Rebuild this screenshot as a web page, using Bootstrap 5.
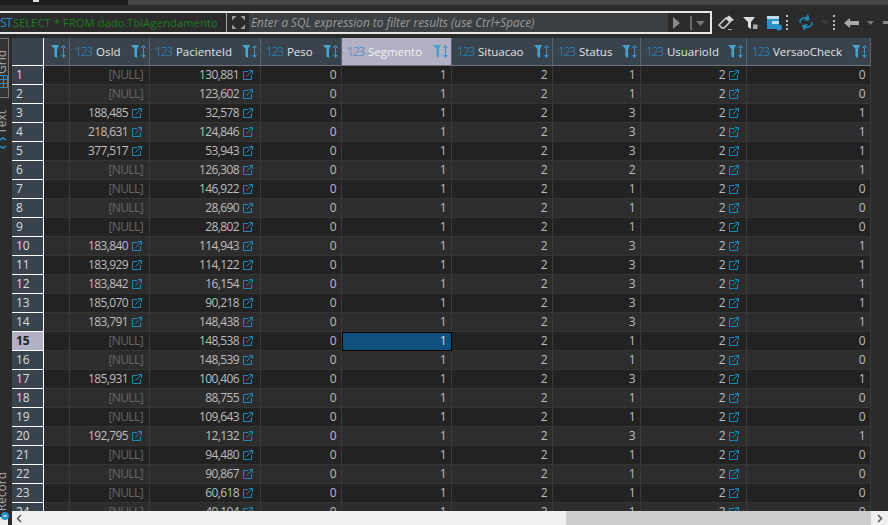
<!DOCTYPE html>
<html lang="en">
<head>
<meta charset="utf-8">
<title>dado.TblAgendamento</title>
<link href="https://cdn.jsdelivr.net/npm/bootstrap@5.3.0/dist/css/bootstrap.min.css" rel="stylesheet">
<style>
html,body{height:100%;overflow:hidden;background:#2b2b2b}
body{font-family:"Open Sans","Noto Sans",sans-serif;font-size:12px;color:#c8c8c8}
.app{width:888px;height:525px}
.topstrip{height:5px;background:#1c1c1c}
.topmark{width:6px;height:2px;margin-left:33px;background:#ddd}
.topfill{margin-left:89px;background:#454545}
.toolrow{height:33px;background:#2b2b2b;padding-top:6px}
.filterbox{width:712px;height:23px;border:2px solid #e6e6e6;border-left:0;background:#3c3f41}
.sqltext{width:226px;color:#1f7a1f;font-size:11.300px;background:#2b2b2b;white-space:nowrap;line-height:19px}
.sqlicon{color:#2a8fc4;font-size:12.500px;letter-spacing:-1px;margin-right:1px}
.expand{width:23px;height:19px;border-left:1px solid #aaa;background:#2b2b2b}
.hint{color:#9a9a9a;font-style:italic;font-size:11.800px;line-height:19px;white-space:nowrap;padding-left:2px}
.runbox{width:42px;height:19px;background:#2b2b2b}
.slot{height:23px}
.s28{width:28px}.s22{width:22px}.s24{width:24px}.s5{width:5px}.s29{width:29px}.s10{width:10px}.s8{width:8px}.s26{width:26px}.s12{width:12px}
.sep{width:2px;height:15px;border-left:2px dotted #bbb}
.mainarea{height:487px}
.rail{width:12px;background:#2b2b2b;position:relative;overflow:hidden}
.railbox{position:absolute;top:0;left:-1px;width:10px;height:60px;border:1px solid #777;background:#333}
.railtab{position:absolute;left:-5px;writing-mode:vertical-rl;transform:rotate(180deg);color:#a8a8a8;font-size:12px;line-height:14px}
.railicon{position:absolute;left:0}
.t-grid{top:12px}.t-text{top:72px}.t-rec{top:434px}
.i-grid{top:37px}.i-text{top:99px}.i-rec{top:474px}
.gridwrap{width:876px;overflow:hidden;background:#2b2b2b}
.rows{height:473px;overflow:hidden}
.dg{table-layout:fixed;border-collapse:separate;border-spacing:0;width:859px;margin:0}
.dg th,.dg td{padding:0;box-sizing:border-box;white-space:nowrap;overflow:hidden}
.dg thead th{height:28px;background:#38434e;color:#e2e2e2;font-weight:400;font-size:11.500px;border-right:1px solid #5b646c;border-bottom:1px solid #6f7378;vertical-align:middle}
.dg thead th.corner{border-right:1px solid #fff;border-bottom:1px solid #fff}
.dg thead th.active-col{background:#b1b0c4;color:#f2f2f2}
.dg .nm{color:#2a8fc4;font-size:12px;font-weight:300;letter-spacing:-1.200px;margin-right:4px}
.dg .active-col .nm{color:#2f86c0}
.dg tbody td{height:19px;font-size:12px;letter-spacing:-.6px;line-height:18px;padding:0 5px 0 0;text-align:right;vertical-align:top;border-right:1px solid #3a3a3a;color:#bdbdbd;border-bottom:1px solid #343434}
.dg tbody tr:nth-child(odd) td{background:#222}
.dg tbody tr:nth-child(even) td{background:#2d2d2d}
.dg tbody th{height:19px;background:#38434e!important;color:#dcdcdc;font-weight:400;border-right:1px solid #fff;border-bottom:1px solid #fff;padding:0 0 0 4px;line-height:18px;vertical-align:top}
.dg tbody th.cur{background:#b1b0c4!important;color:#222;font-weight:700}
.dg tbody td.null{color:#666;padding-right:6px}
.dg tbody td.sel{background:#10507f!important;outline:1px solid #000;outline-offset:-1px;color:#ddd}
.lk{width:10px;height:10px;margin-left:4px;vertical-align:-1px}
.linked{padding-right:7px!important}
.hscroll{height:14px;background:#f0f0f0}
.arrowl{width:14px}
.arrowr{width:17px}
.thumb{background:#cdcdcd;width:305px;margin-left:auto;height:14px}
.colfilter{flex:0 0 auto;margin-right:2px}
.hcell{padding-left:5px}
</style>
</head>
<body>
<svg width="0" height="0" class="position-absolute">
<symbol id="lnk" viewBox="0 0 10 10"><path d="M5.500 1.500H.500v8h8V5M3.500 6.500L9.500.500M6 .500h3.500V4" fill="none" stroke="#1f86b8" stroke-width="1"/></symbol>
<symbol id="flt" viewBox="0 0 17 15"><path d="M1 1h8L7 5v9L4.500 12.500V5z" fill="#4aa3cf"/><path d="M13.500 1l-2.500 3h5zM13.500 14l-2.500-3h5zM13 3h1v9h-1z" fill="#3b93c4"/></symbol>
</svg>
<div class="app d-flex flex-column">
  <div class="topstrip d-flex"><div class="topmark"></div><div class="topfill flex-grow-1"></div></div>
  <div class="toolrow d-flex align-items-start">
    <div class="filterbox d-flex">
      <div class="sqltext"><span class="sqlicon">ST</span>SELECT * FROM dado.TblAgendamento</div>
      <div class="expand d-flex align-items-center justify-content-center">
        <svg width="15" height="15" viewBox="0 0 15 15"><path d="M1 1h4.500L1 5.500zM14 1H9.500L14 5.500zM1 14h4.500L1 9.500zM14 14H9.500L14 9.500z" fill="#9a9a9a"/></svg>
      </div>
      <div class="hint flex-grow-1">Enter a SQL expression to filter results (use Ctrl+Space)</div>
      <div class="runbox d-flex align-items-center justify-content-around">
        <svg width="9" height="12" viewBox="0 0 9 12"><path d="M1 0l7 6-7 6z" fill="#8a8a8a"/></svg>
        <svg width="16" height="14" viewBox="0 0 16 14"><path d="M1 0v14" stroke="#aaa"/><path d="M6 5h9l-4.500 5z" fill="#777"/></svg>
      </div>
    </div>
    <div class="d-flex align-items-center">
      <div class="slot s28 d-flex align-items-center justify-content-center"><svg width="17" height="16" viewBox="0 0 17 16"><path d="M1 10l7-7 4 4-6 6H4z" fill="none" stroke="#d0d0d0" stroke-width="1.500"/><path d="M8 3l3-2.500 5 4.500-4 2z" fill="#d8d8d8"/><path d="M10 14.500h4" stroke="#aaa"/></svg></div>
      <div class="slot s22 d-flex align-items-center justify-content-center"><svg width="16" height="14" viewBox="0 0 16 14"><path d="M0 1h12L8 6v7L5 11V6z" fill="#ddd"/><path d="M10 8.500h4.500V13H10z" fill="#aaa"/></svg></div>
      <div class="slot s24 d-flex align-items-center justify-content-center"><svg width="17" height="16" viewBox="0 0 17 16"><path d="M1 1h12v13H1z" fill="#2a8fc4"/><path d="M1 1h12v3H1zM6 6h7v3H6z" fill="#bde"/><circle cx="13" cy="12.500" r="3" fill="#2a8fc4"/></svg></div>
      <div class="slot s5 d-flex align-items-center"><span class="sep"></span></div>
      <div class="slot s29 d-flex align-items-center justify-content-center"><svg width="16" height="17" viewBox="0 0 16 17"><path d="M1 8a6 6 0 0 1 7-5l2-3 2 6-6 1 1.500-2A3.500 3.500 0 0 0 3 9.500zM15 9a6 6 0 0 1-7 5l-2 3-2-6 6-1-1.500 2A3.500 3.500 0 0 0 13 7.500z" fill="#1f86b8"/></svg></div>
      <div class="slot s10 d-flex align-items-center justify-content-center"><svg width="8" height="5" viewBox="0 0 8 5"><path d="M0 0h8L4 5z" fill="#3a3a3a"/></svg></div>
      <div class="slot s8 d-flex align-items-center justify-content-center"><span class="sep"></span></div>
      <div class="slot s26 d-flex align-items-center justify-content-center"><svg width="15" height="12" viewBox="0 0 15 12"><path d="M0 6l6-5v3h9v4H6v3z" fill="#aaa"/></svg></div>
      <div class="slot s12 d-flex align-items-center justify-content-center"><svg width="7" height="4" viewBox="0 0 7 4"><path d="M0 0h7L3.500 4z" fill="#777"/></svg></div>
      <div class="slot s12 d-flex align-items-center justify-content-end"><svg width="5" height="3" viewBox="0 0 5 3"><path d="M0 0h5v3H0z" fill="#888"/></svg></div>
    </div>
  </div>
  <div class="mainarea d-flex">
    <div class="rail">
      <div class="railbox"></div>
      <span class="railtab t-grid">Grid</span>
      <svg class="railicon i-grid" width="8" height="13" viewBox="0 0 8 13"><path d="M0 .500h7.500v12H0M0 4.500h7.500M0 8.500h7.500M3.500 .500v12" fill="none" stroke="#2a8fc4"/></svg>
      <span class="railtab t-text">Text</span>
      <svg class="railicon i-text" width="8" height="12" viewBox="0 0 8 12"><path d="M0 3l3-2 3 2M0 9l3 2 3-2" fill="none" stroke="#2a8fc4" stroke-width="1.500"/></svg>
      <span class="railtab t-rec">Record</span>
      <svg class="railicon i-rec" width="12" height="13" viewBox="0 0 12 13"><path d="M0 5h8v8H0z" fill="#eee"/><circle cx="5" cy="4" r="4" fill="#2a8fc4"/><path d="M3 4h4" stroke="#fff"/></svg>
    </div>
    <div class="gridwrap d-flex flex-column">
      <div class="rows">
        <table class="dg">
          <colgroup><col style="width:32px"><col style="width:26px"><col style="width:80px"><col style="width:111px"><col style="width:81px"><col style="width:110px"><col style="width:101px"><col style="width:88px"><col style="width:106px"><col style="width:124px"></colgroup>
          <thead><tr>
            <th class="corner"></th>
            <th><div class="d-flex justify-content-end"><svg class="colfilter" width="17" height="15"><use href="#flt"/></svg></div></th>
            <th><div class="hcell d-flex justify-content-between align-items-center"><span><span class="nm">123</span>OsId</span><svg class="colfilter" width="17" height="15"><use href="#flt"/></svg></div></th>
            <th><div class="hcell d-flex justify-content-between align-items-center"><span><span class="nm">123</span>PacienteId</span><svg class="colfilter" width="17" height="15"><use href="#flt"/></svg></div></th>
            <th><div class="hcell d-flex justify-content-between align-items-center"><span><span class="nm">123</span>Peso</span><svg class="colfilter" width="17" height="15"><use href="#flt"/></svg></div></th>
            <th class="active-col"><div class="hcell d-flex justify-content-between align-items-center"><span><span class="nm">123</span>Segmento</span><svg class="colfilter" width="17" height="15"><use href="#flt"/></svg></div></th>
            <th><div class="hcell d-flex justify-content-between align-items-center"><span><span class="nm">123</span>Situacao</span><svg class="colfilter" width="17" height="15"><use href="#flt"/></svg></div></th>
            <th><div class="hcell d-flex justify-content-between align-items-center"><span><span class="nm">123</span>Status</span><svg class="colfilter" width="17" height="15"><use href="#flt"/></svg></div></th>
            <th><div class="hcell d-flex justify-content-between align-items-center"><span><span class="nm">123</span>UsuarioId</span><svg class="colfilter" width="17" height="15"><use href="#flt"/></svg></div></th>
            <th><div class="hcell d-flex justify-content-between align-items-center"><span><span class="nm">123</span>VersaoCheck</span><svg class="colfilter" width="17" height="15"><use href="#flt"/></svg></div></th>
          </tr></thead>
          <tbody id="tb"></tbody>
        </table>
      </div>
      <div class="hscroll d-flex">
        <div class="arrowl d-flex align-items-center justify-content-center"><svg width="6" height="9" viewBox="0 0 6 9"><path d="M5 1L1.500 4.500 5 8" fill="none" stroke="#555" stroke-width="1.500"/></svg></div>
        <div class="flex-grow-1 d-flex"><div class="thumb"></div></div>
        <div class="arrowr d-flex align-items-center justify-content-center"><svg width="6" height="9" viewBox="0 0 6 9"><path d="M1 1l3.500 3.500L1 8" fill="none" stroke="#555" stroke-width="1.500"/></svg></div>
      </div>
    </div>
  </div>
</div>
<script>
const data=[[null,"130,881",1,0],[null,"123,602",1,0],["188,485","32,578",3,1],["218,631","124,846",3,1],["377,517","53,943",3,1],[null,"126,308",2,1],[null,"146,922",1,0],[null,"28,690",1,0],[null,"28,802",1,0],["183,840","114,943",3,1],["183,929","114,122",3,1],["183,842","16,154",3,1],["185,070","90,218",3,1],["183,791","148,438",3,1],[null,"148,538",1,0],[null,"148,539",1,0],["185,931","100,406",3,1],[null,"88,755",1,0],[null,"109,643",1,0],["192,795","12,132",3,1],[null,"94,480",1,0],[null,"90,867",1,0],[null,"60,618",1,0],[null,"40,104",1,0]];
const lk='<svg class="lk"><use href="#lnk"/></svg>';
document.getElementById('tb').innerHTML=data.map((r,i)=>`<tr><th class="${i==14?'cur':''}">${i+1}</th><td></td>`+
(r[0]?`<td class="linked">${r[0]}${lk}</td>`:`<td class="null">[NULL]</td>`)+
`<td class="linked">${r[1]}${lk}</td><td>0</td><td class="${i==14?'sel':''}">1</td><td>2</td><td>${r[2]}</td><td class="linked">2${lk}</td><td>${r[3]}</td></tr>`).join('');
</script>
<script src="https://cdn.jsdelivr.net/npm/bootstrap@5.3.0/dist/js/bootstrap.bundle.min.js"></script>
</body>
</html>
